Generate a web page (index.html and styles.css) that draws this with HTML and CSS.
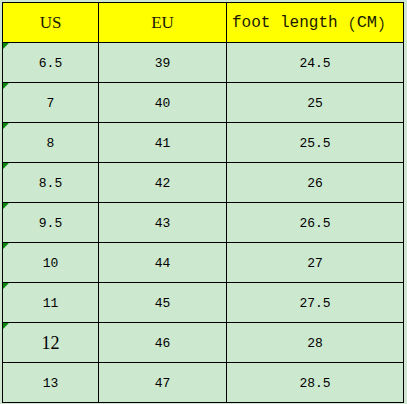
FILE: index.html
```html
<!DOCTYPE html>
<html>
<head>
<meta charset="utf-8">
<link rel="stylesheet" href="styles.css">
</head>
<body>
<div class="sheet">
  <div class="cell head">US</div>
  <div class="cell head">EU</div>
  <div class="cell head foot">foot length<span class="cjk">（</span><span class="cm">CM</span><span class="cjk">）</span></div>

  <div class="cell mark">6.5</div><div class="cell">39</div><div class="cell">24.5</div>
  <div class="cell mark">7</div><div class="cell">40</div><div class="cell">25</div>
  <div class="cell mark">8</div><div class="cell">41</div><div class="cell">25.5</div>
  <div class="cell mark">8.5</div><div class="cell">42</div><div class="cell">26</div>
  <div class="cell mark">9.5</div><div class="cell">43</div><div class="cell">26.5</div>
  <div class="cell mark">10</div><div class="cell">44</div><div class="cell">27</div>
  <div class="cell mark">11</div><div class="cell">45</div><div class="cell">27.5</div>
  <div class="cell mark big">12</div><div class="cell">46</div><div class="cell">28</div>
  <div class="cell">13</div><div class="cell">47</div><div class="cell">28.5</div>
</div>
</body>
</html>
```
FILE: styles.css
```css
html, body {
  margin: 0;
  padding: 0;
  background: #cfe6d1;
}
body {
  padding: 2px 0 0 2px;
}
.sheet {
  display: grid;
  grid-template-columns: 95px 127px 176px;
  grid-auto-rows: 39px;
  gap: 1px;
  padding: 1px;
  background: #000;
  width: max-content;
}
.cell {
  position: relative;
  background: #cce8cf;
  display: flex;
  align-items: center;
  justify-content: center;
  font-family: "Liberation Mono", monospace;
  font-size: 13px;
  color: #000;
  padding-top: 2px;
  box-sizing: border-box;
}
.head {
  background: #ffff00;
  font-family: "Liberation Serif", serif;
  font-size: 17px;
  color: #1a1a00;
  padding-top: 0;
}
.foot {
  justify-content: flex-start;
  padding-left: 5px;
  font-family: "Liberation Mono", monospace;
  font-size: 16px;
}
.cjk {
  display: inline-block;
  width: 19px;
  text-align: center;
  font-family: "Noto Sans CJK SC", sans-serif;
  font-size: 16px;
}
.cm {
  font-size: 17px;
}
.big {
  font-family: "Liberation Serif", serif;
  font-size: 18px;
}
.mark::before {
  content: "";
  position: absolute;
  left: 0;
  top: 0;
  border-top: 6px solid #0a8a0a;
  border-right: 6px solid transparent;
}
```
